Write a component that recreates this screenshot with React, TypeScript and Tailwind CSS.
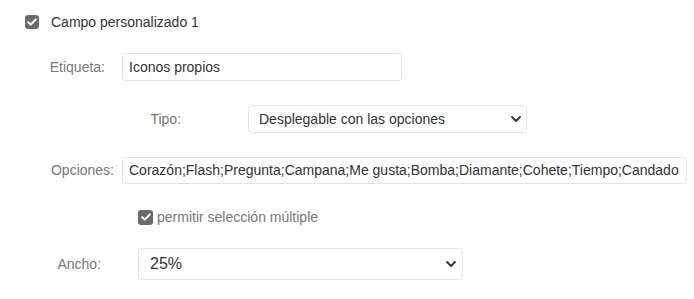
import React from "react";

function Check({ className = "" }: { className?: string }) {
  return (
    <span className={`flex items-center justify-center rounded-[3px] bg-[#6b6b6b] ${className}`}>
      <svg width="10" height="8" viewBox="0 0 10 8" fill="none">
        <path d="M1.2 4.2 L3.8 6.6 L8.8 1.4" stroke="#fff" strokeWidth="2" strokeLinecap="round" strokeLinejoin="round" />
      </svg>
    </span>
  );
}

function Chevron() {
  return (
    <svg width="10" height="6" viewBox="0 0 10 6" fill="none">
      <path d="M1 1 L5 5 L9 1" stroke="#333" strokeWidth="1.8" strokeLinecap="round" strokeLinejoin="round" />
    </svg>
  );
}

export default function App() {
  return (
    <div className="w-[694px] h-[299px] bg-white pt-[15px] text-[14px] font-['Liberation_Sans',Arial,sans-serif] text-[#333]">
      {/* main checkbox */}
      <div className="flex items-center h-[14px] pl-[25px]">
        <Check className="w-[14px] h-[14px]" />
        <span className="ml-[12px] leading-none">Campo personalizado 1</span>
      </div>

      {/* Etiqueta */}
      <div className="flex items-center mt-[24px] h-[28px]">
        <span className="w-[122px] pr-[17px] text-right text-[#777]">Etiqueta:</span>
        <div className="w-[280px] h-[28px] border border-[#e3e3e3] rounded-[4px] flex items-center pl-[6px]">
          Iconos propios
        </div>
      </div>

      {/* Tipo */}
      <div className="flex items-center mt-[24px] h-[28px]">
        <span className="w-[248px] pr-[67px] text-right text-[#777]">Tipo:</span>
        <div className="w-[279px] h-[28px] border border-[#e3e3e3] rounded-[4px] flex items-center justify-between pl-[10px] pr-[5px]">
          <span>Desplegable con las opciones</span>
          <Chevron />
        </div>
      </div>

      {/* Opciones */}
      <div className="flex items-center mt-[24px] h-[27px]">
        <span className="w-[122px] pr-[8px] text-right text-[#777]">Opciones:</span>
        <div className="w-[565px] h-[27px] border border-[#e3e3e3] rounded-[4px] flex items-center pl-[6px] overflow-hidden">
          <span className="whitespace-nowrap">
            Corazón;Flash;Pregunta;Campana;Me gusta;Bomba;Diamante;Cohete;Tiempo;Candado
          </span>
        </div>
      </div>

      {/* permitir */}
      <div className="flex items-center mt-[26px] h-[14px] pl-[138px]">
        <Check className="w-[15px] h-[15px]" />
        <span className="ml-[4px] leading-none text-[#777]">permitir selección múltiple</span>
      </div>

      {/* Ancho */}
      <div className="flex items-center mt-[24px] h-[32px]">
        <span className="w-[138px] pr-[37px] text-right text-[#777]">Ancho:</span>
        <div className="w-[325px] h-[32px] border border-[#e3e3e3] rounded-[4px] flex items-center justify-between pl-[11px] pr-[6px] text-[16px]">
          <span>25%</span>
          <Chevron />
        </div>
      </div>
    </div>
  );
}
